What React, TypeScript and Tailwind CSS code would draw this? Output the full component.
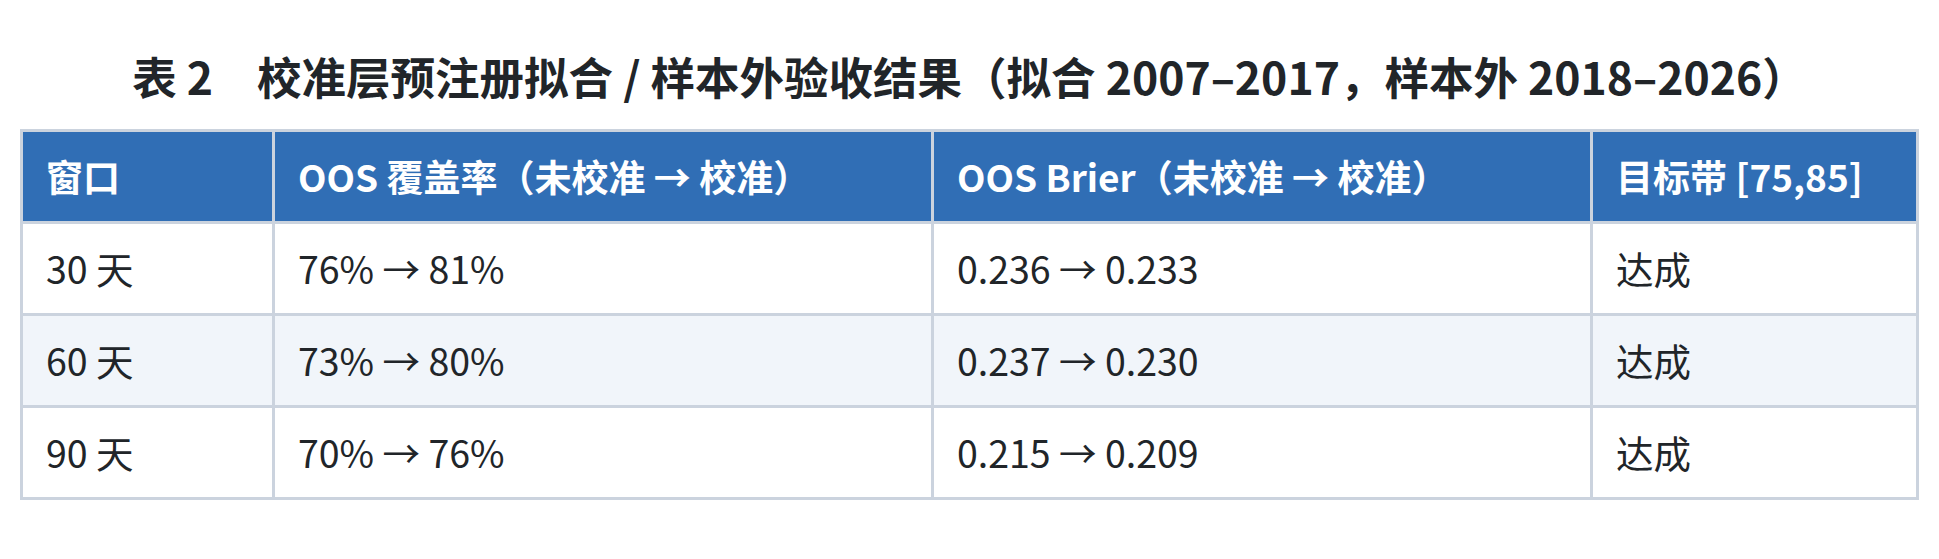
const rows = [
  { win: "30 天", cov: "76% → 81%", brier: "0.236 → 0.233", ok: "达成" },
  { win: "60 天", cov: "73% → 80%", brier: "0.237 → 0.230", ok: "达成" },
  { win: "90 天", cov: "70% → 76%", brier: "0.215 → 0.209", ok: "达成" },
]

export default function App() {
  return (
    <div className="w-[1939px] h-[559px] bg-white px-[20px] pt-[46px] font-['Noto_Sans_CJK_SC','Noto_Sans',sans-serif] text-[#212529]">
      <h2 className="text-center text-[44.5px] leading-[60px] font-bold">
        表 2<span className="inline-block w-[44px]" />校准层预注册拟合 / 样本外验收结果（拟合 2007–2017，样本外 2018–2026）
      </h2>

      <table className="mt-[23px] w-full table-fixed border-collapse text-[37.5px]">
        <colgroup>
          <col className="w-[252px]" />
          <col className="w-[659px]" />
          <col className="w-[659px]" />
          <col />
        </colgroup>
        <thead>
          <tr className="bg-[#306eb5] text-white text-[37px]">
            <th className="h-[92px] border-[3px] border-[#cbd3de] px-[23px] text-left align-middle font-bold">窗口</th>
            <th className="h-[92px] border-[3px] border-[#cbd3de] px-[23px] text-left align-middle font-bold">OOS 覆盖率（未校准 → 校准）</th>
            <th className="h-[92px] border-[3px] border-[#cbd3de] px-[23px] text-left align-middle font-bold">OOS Brier（未校准 → 校准）</th>
            <th className="h-[92px] border-[3px] border-[#cbd3de] px-[23px] text-left align-middle font-bold">目标带 [75,85]</th>
          </tr>
        </thead>
        <tbody>
          {rows.map((r, i) => (
            <tr key={r.win} className={i % 2 === 1 ? "bg-[#f1f5fa]" : "bg-white"}>
              <td className="h-[92px] border-[3px] border-[#cbd3de] px-[23px] align-middle">{r.win}</td>
              <td className="h-[92px] border-[3px] border-[#cbd3de] px-[23px] align-middle">{r.cov}</td>
              <td className="h-[92px] border-[3px] border-[#cbd3de] px-[23px] align-middle">{r.brier}</td>
              <td className="h-[92px] border-[3px] border-[#cbd3de] px-[23px] align-middle">{r.ok}</td>
            </tr>
          ))}
        </tbody>
      </table>
    </div>
  )
}
